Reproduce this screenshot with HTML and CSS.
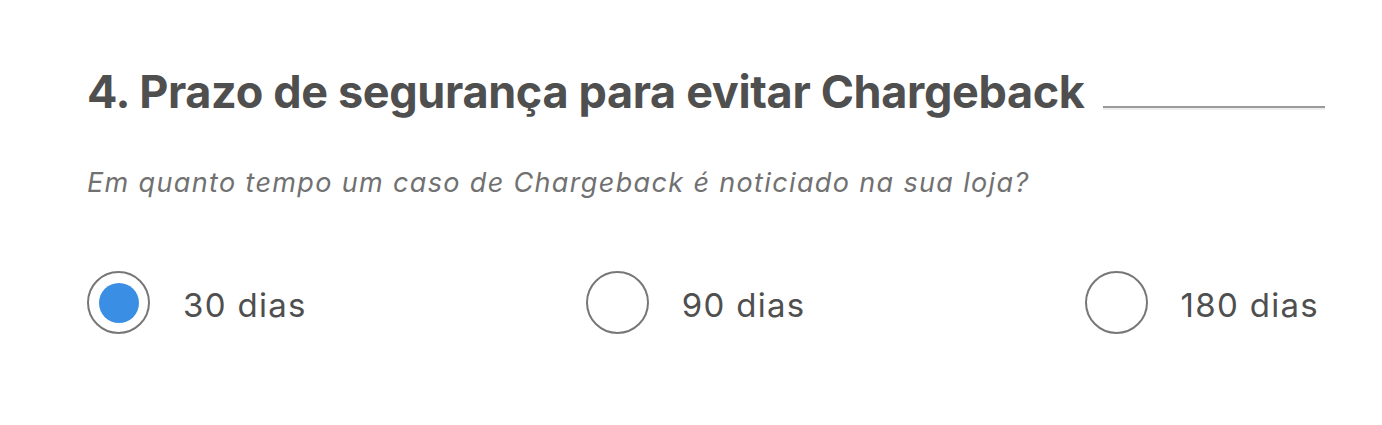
FILE: index.html
```html
<!DOCTYPE html>
<html lang="pt">
<head>
<meta charset="utf-8">
<link rel="stylesheet" href="styles.css">
</head>
<body>
<section class="question">
  <div class="title-row">
    <h2 class="title">4. Prazo de segurança para evitar Chargeback</h2>
    <span class="rule"></span>
  </div>
  <p class="subtitle">Em quanto tempo um caso de Chargeback é noticiado na sua loja?</p>
  <div class="options">
    <label class="option">
      <span class="radio checked"><span class="dot"></span></span>
      <span class="label">30 dias</span>
    </label>
    <label class="option">
      <span class="radio"></span>
      <span class="label">90 dias</span>
    </label>
    <label class="option">
      <span class="radio"></span>
      <span class="label">180 dias</span>
    </label>
  </div>
</section>
</body>
</html>
```
FILE: styles.css
```css
html, body {
  margin: 0;
  padding: 0;
  background: #ffffff;
}
body {
  font-family: Inter, "Noto Sans", sans-serif;
  color: #555555;
}
.question {
  width: 1238px;
  padding: 60px 0 0 87px;
  box-sizing: content-box;
}
.title-row {
  display: flex;
  align-items: flex-end;
}
.title {
  margin: 0;
  font-size: 45px;
  font-weight: 700;
  line-height: 64px;
  color: #4f4f4f;
  letter-spacing: -0.35px;
  white-space: nowrap;
}
.rule {
  flex: 1;
  margin-left: 18px;
  margin-bottom: 14px;
  height: 2px;
  background: #9b9b9b;
  border-bottom: 2px solid #eeeeee;
}
.subtitle {
  margin: 43px 0 0 0;
  font-size: 27px;
  font-style: italic;
  line-height: 32px;
  color: #717171;
  letter-spacing: 1.35px;
}
.options {
  display: flex;
  justify-content: space-between;
  align-items: center;
  margin-top: 72px;
  padding-right: 6px;
}
.option {
  display: flex;
  align-items: center;
  gap: 33px;
}
.radio {
  width: 63px;
  height: 63px;
  box-sizing: border-box;
  border: 2px solid #777777;
  border-radius: 50%;
  display: flex;
  align-items: center;
  justify-content: center;
}
.dot {
  width: 40px;
  height: 40px;
  border-radius: 50%;
  background: #3a8fe5;
}
.label {
  font-size: 33px;
  color: #4f4f4f;
  letter-spacing: 1.3px;
  padding-top: 4px;
}
```
